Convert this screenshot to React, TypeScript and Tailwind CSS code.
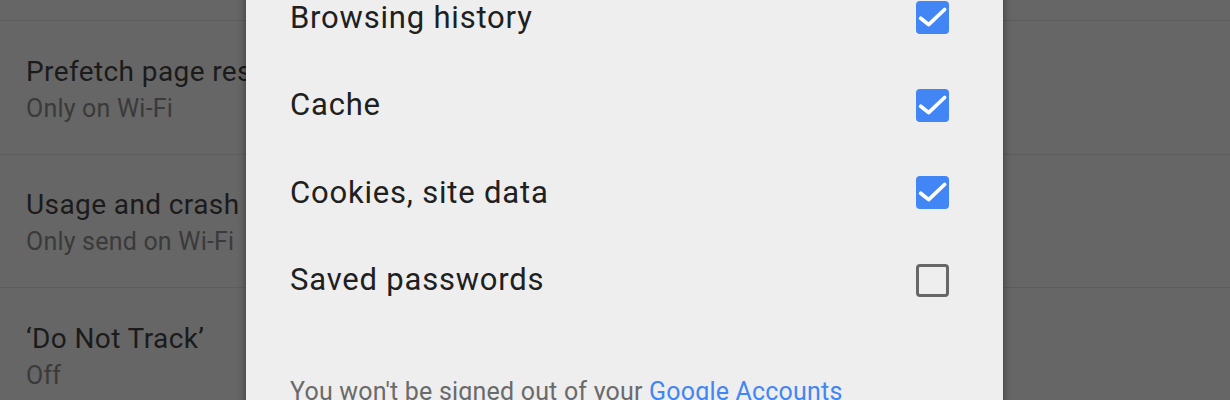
import React from "react";

const settings = [
  { title: "Prefetch page resources", sub: "Only on Wi-Fi" },
  { title: "Usage and crash reports", sub: "Only send on Wi-Fi" },
  { title: "\u2018Do Not Track\u2019", sub: "Off" },
];

const options = [
  { label: "Browsing history", checked: true },
  { label: "Cache", checked: true },
  { label: "Cookies, site data", checked: true },
  { label: "Saved passwords", checked: false },
];

function Checkbox({ checked }: { checked: boolean }) {
  if (!checked) {
    return (
      <div className="h-[33px] w-[33px] rounded-[4px] border-[3px] border-[#676767]" />
    );
  }
  return (
    <div className="flex h-[33px] w-[33px] items-center justify-center rounded-[4px] bg-[#4285f4]">
      <svg viewBox="0 0 24 24" className="h-[33px] w-[33px]">
        <polyline
          points="3.4,12.6 9.2,17.2 20.8,6.2"
          fill="none"
          stroke="#ffffff"
          strokeWidth="2.7"
          strokeLinecap="round"
          strokeLinejoin="round"
        />
      </svg>
    </div>
  );
}

export default function App() {
  return (
    <div
      className="relative h-[400px] w-[1230px] overflow-hidden bg-[#666666]"
      style={{ fontFamily: "Roboto, 'Noto Sans', sans-serif" }}
    >
      {/* settings list behind the dialog */}
      <div className="flex flex-col pt-[20px]">
        {settings.map((s) => (
          <div
            key={s.title}
            className="h-[133.5px] border-t border-[#5d5d5d] px-[26px] pt-[34.5px]"
          >
            <div className="whitespace-nowrap text-[28px] leading-[32px] tracking-[0.4px] text-[#1b1b1b]">
              {s.title}
            </div>
            <div className="mt-[6px] whitespace-nowrap text-[25px] leading-[30px] tracking-[0.2px] text-[#3a3a3a]">
              {s.sub}
            </div>
          </div>
        ))}
      </div>

      {/* clear browsing data dialog */}
      <div className="absolute left-[246px] top-[-26px] flex h-[460px] w-[757px] flex-col bg-[#eeeeee] pl-[44px] pr-[54px] shadow-[0_0_8px_rgba(0,0,0,0.45)]">
        {options.map((o) => (
          <div key={o.label} className="flex h-[87.5px] items-center justify-between">
            <span className="text-[31px] tracking-[0.8px] text-[#202020]">{o.label}</span>
            <Checkbox checked={o.checked} />
          </div>
        ))}
        <p className="mt-[49px] whitespace-nowrap text-[25px] tracking-[0.2px] text-[#6a6a6a]">
          You won't be signed out of your{" "}
          <span className="text-[#4285f4]">Google Accounts</span>
        </p>
      </div>
    </div>
  );
}
